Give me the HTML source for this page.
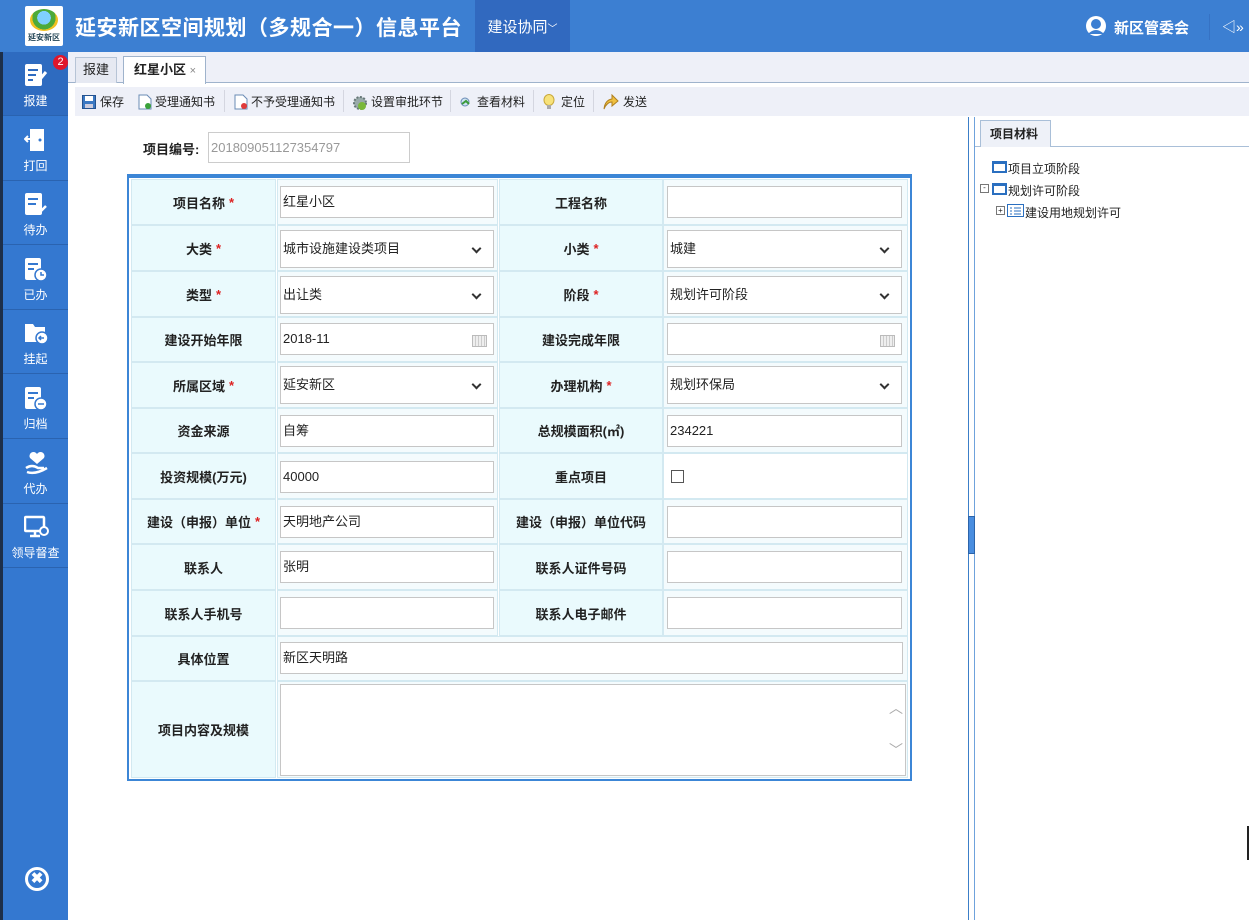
<!DOCTYPE html>
<html><head><meta charset="utf-8">
<style>
*{margin:0;padding:0;box-sizing:border-box}
body{width:1249px;height:920px;position:relative;overflow:hidden;background:#fff;font-family:"Liberation Sans","Noto Sans CJK SC",sans-serif;font-size:12px;color:#222}
.a{position:absolute}
#hdr{left:0;top:0;width:1249px;height:52px;background:#3c7fd2}
#side{left:0;top:52px;width:68px;height:868px;background:#3478d0;border-left:3px solid #1d2f4a}
.si{position:absolute;left:0;width:65px;height:64px;border-bottom:1px solid #2a63b0;color:#fff;text-align:center;font-size:12px}
.si .t{position:absolute;left:0;width:65px;top:40px}
.si svg{position:absolute;left:21px;top:10px}
.l{position:absolute;background:#eafafd;border:1px solid #d3e9f1;font-weight:bold;font-size:13px;text-align:center;display:flex;align-items:center;justify-content:center;color:#222}
.l b{color:#d22;margin-left:4px;font-weight:bold}
.c{position:absolute;background:#f4fbfd;border:1px solid #d3e9f1}
.i{position:absolute;background:#fff;border:1px solid #c6c6c6;height:32px;padding-left:2px;line-height:30px;font-size:13px;color:#222}
.dd:after{content:"";position:absolute;right:13px;top:14px;width:5px;height:5px;border-right:2px solid #333;border-bottom:2px solid #333;transform:rotate(45deg)}
.cal:after{content:"";position:absolute;right:6px;top:11px;width:13px;height:10px;border:1px solid #bbb;background:repeating-linear-gradient(90deg,#eee 0 2px,#ccc 2px 3px)}
.tb{position:absolute;top:92px;font-size:12px;color:#222;height:20px;line-height:20px}
.sep{position:absolute;top:90px;width:1px;height:22px;background:#d4d6e0}
</style></head><body>
<div class="a" id="hdr">
  <div class="a" style="left:25px;top:6px;width:38px;height:40px;background:#fff;border-radius:2px">
    <div class="a" style="left:5px;top:3px;width:28px;height:22px;border-radius:50%;background:radial-gradient(circle at 50% 40%,#7fd0ff 0 35%,#4caa3a 36% 60%,#f0c020 61%)"></div>
    <div class="a" style="left:1px;top:27px;width:36px;font-size:8px;font-weight:bold;color:#245;text-align:center;line-height:10px">延安新区</div>
  </div>
  <div class="a" style="left:75px;top:12px;font-size:21px;color:#fff;font-weight:bold;letter-spacing:0.5px">延安新区空间规划（多规合一）信息平台</div>
  <div class="a" style="left:475px;top:0;width:95px;height:52px;background:#3169bf;color:#fff;font-size:15px;line-height:56px;text-align:center">建设协同<span style="font-size:10px">﹀</span></div>
  <svg class="a" style="left:1084px;top:16px" width="24" height="22" viewBox="0 0 24 22"><circle cx="12" cy="10" r="10" fill="#fff"/><circle cx="12" cy="8" r="5" fill="#3c7fd2"/><path d="M4 18 Q12 10 20 18" fill="#3c7fd2"/></svg>
  <div class="a" style="left:1114px;top:17px;color:#fff;font-size:15px;font-weight:bold">新区管委会</div>
  <div class="a" style="left:1209px;top:14px;width:1px;height:26px;background:#3672c4"></div>
  <div class="a" style="left:1222px;top:17px;color:#fff;font-size:14px">◁»</div>
</div>

<div class="a" id="side">
  <div class="si" style="top:0;background:#2e6bc0">
    <svg width="24" height="26" viewBox="0 0 24 26"><rect x="1" y="2" width="17" height="22" rx="2" fill="#fff"/><path d="M4 8h10M4 13h8M4 18h5" stroke="#2e6bc0" stroke-width="2"/><path d="M12 22 L22 10" stroke="#fff" stroke-width="3"/></svg>
    <div class="t">报建</div>
    <div class="a" style="left:50px;top:3px;width:15px;height:15px;border-radius:50%;background:#e0162b;color:#fff;font-size:11px;line-height:15px">2</div>
  </div>
  <div class="si" style="top:65px"><svg width="24" height="26" viewBox="0 0 24 26"><path d="M6 2h14v22H6z" fill="#fff"/><path d="M1 12h8M4 9l-3 3 3 3" stroke="#fff" stroke-width="2" fill="none"/><circle cx="16" cy="13" r="1.5" fill="#3478d0"/></svg><div class="t">打回</div></div>
  <div class="si" style="top:129px"><svg width="24" height="26" viewBox="0 0 24 26"><rect x="1" y="2" width="17" height="22" rx="2" fill="#fff"/><path d="M4 8h10M4 13h8" stroke="#3478d0" stroke-width="2"/><path d="M12 19l3 3 7-7" stroke="#fff" stroke-width="2.5" fill="none"/></svg><div class="t">待办</div></div>
  <div class="si" style="top:194px"><svg width="24" height="26" viewBox="0 0 24 26"><rect x="1" y="2" width="16" height="22" rx="2" fill="#fff"/><path d="M4 8h10M4 13h6" stroke="#3478d0" stroke-width="2"/><circle cx="17" cy="19" r="6" fill="#fff" stroke="#3478d0" stroke-width="1.5"/><path d="M17 16v3h3" stroke="#3478d0" stroke-width="1.5" fill="none"/></svg><div class="t">已办</div></div>
  <div class="si" style="top:258px"><svg width="26" height="26" viewBox="0 0 26 26"><path d="M1 4h8l2 3h10v15H1z" fill="#fff"/><circle cx="18" cy="18" r="6" fill="#fff" stroke="#3478d0" stroke-width="1.5"/><path d="M20 18h-4M17 16l-2 2 2 2" stroke="#3478d0" stroke-width="1.5" fill="none"/></svg><div class="t">挂起</div></div>
  <div class="si" style="top:323px"><svg width="24" height="26" viewBox="0 0 24 26"><rect x="1" y="2" width="16" height="22" rx="2" fill="#fff"/><path d="M4 8h10M4 13h6" stroke="#3478d0" stroke-width="2"/><circle cx="17" cy="19" r="6" fill="#fff" stroke="#3478d0" stroke-width="1.5"/><path d="M14 19h6" stroke="#3478d0" stroke-width="1.5"/></svg><div class="t">归档</div></div>
  <div class="si" style="top:388px"><svg width="26" height="26" viewBox="0 0 26 26"><path d="M13 14 L6 8 a4 4 0 0 1 7-4 a4 4 0 0 1 7 4z" fill="#fff"/><path d="M2 18 q6-4 12 0 h6 M3 22 q8 3 20-4" stroke="#fff" stroke-width="2.5" fill="none"/></svg><div class="t">代办</div></div>
  <div class="si" style="top:452px"><svg width="26" height="26" viewBox="0 0 26 26"><rect x="1" y="3" width="19" height="14" rx="1" fill="none" stroke="#fff" stroke-width="2.5"/><path d="M6 22h10M11 17v5" stroke="#fff" stroke-width="2.5"/><circle cx="20" cy="17" r="4" fill="#3478d0" stroke="#fff" stroke-width="2"/></svg><div class="t">领导督查</div></div>
  <div class="a" style="left:22px;top:815px;width:24px;height:24px;border-radius:50%;border:3px solid #fff;color:#fff;font-size:15px;font-weight:bold;text-align:center;line-height:18px">✖</div>
</div>

<div class="a" style="left:68px;top:52px;width:1181px;height:31px;background:#eef0f8;border-bottom:1px solid #9fb3cc"></div>
<div class="a" style="left:75px;top:57px;width:42px;height:26px;background:#e6e9f2;border:1px solid #b7c4d6;border-bottom:none;text-align:center;line-height:24px;font-size:13px">报建</div>
<div class="a" style="left:123px;top:56px;width:83px;height:28px;background:#fff;border:1px solid #9fb3cc;border-bottom:none;line-height:26px;font-size:13px;font-weight:bold;padding-left:10px">红星小区 <span style="font-weight:normal;color:#888;font-size:11px">×</span></div>
<div class="a" style="left:75px;top:87px;width:1174px;height:29px;background:#eef0f8"></div>
<svg class="a" style="left:82px;top:95px" width="14" height="14" viewBox="0 0 14 14"><rect x="0.5" y="0.5" width="13" height="13" fill="#3b78c2" stroke="#24528f"/><rect x="3" y="1" width="8" height="5" fill="#fff"/><rect x="3" y="9" width="8" height="4" fill="#ccd"/></svg>
<div class="tb" style="left:100px">保存</div>
<svg class="a" style="left:138px;top:94px" width="14" height="16" viewBox="0 0 14 16"><path d="M1 1h8l4 4v10H1z" fill="#fff" stroke="#6a8bb5"/><circle cx="10" cy="12" r="3" fill="#3aa23a"/></svg>
<div class="tb" style="left:155px">受理通知书</div>
<div class="sep" style="left:224px"></div>
<svg class="a" style="left:234px;top:94px" width="14" height="16" viewBox="0 0 14 16"><path d="M1 1h8l4 4v10H1z" fill="#fff" stroke="#6a8bb5"/><circle cx="10" cy="12" r="3" fill="#e03a3a"/></svg>
<div class="tb" style="left:251px">不予受理通知书</div>
<div class="sep" style="left:343px"></div>
<svg class="a" style="left:352px;top:95px" width="16" height="16" viewBox="0 0 16 16"><circle cx="8" cy="8" r="6" fill="#9aa" stroke="#677" stroke-width="2" stroke-dasharray="2 1.5"/><circle cx="10" cy="11" r="4" fill="#7ab83a"/></svg>
<div class="tb" style="left:371px">设置审批环节</div>
<div class="sep" style="left:450px"></div>
<svg class="a" style="left:459px;top:96px" width="14" height="13" viewBox="0 0 14 13"><circle cx="6" cy="6" r="4" fill="#cfe3f5" stroke="#6a8bb5"/><path d="M3 8l4-3 3 3" stroke="#3a9a3a" stroke-width="2" fill="none"/></svg>
<div class="tb" style="left:477px">查看材料</div>
<div class="sep" style="left:533px"></div>
<svg class="a" style="left:543px;top:94px" width="12" height="17" viewBox="0 0 12 17"><ellipse cx="6" cy="6" rx="5" ry="5.5" fill="#f7e27a" stroke="#c9a83a"/><rect x="4" y="11" width="4" height="4" fill="#aaa"/></svg>
<div class="tb" style="left:561px">定位</div>
<div class="sep" style="left:593px"></div>
<svg class="a" style="left:602px;top:94px" width="17" height="16" viewBox="0 0 17 16"><path d="M2 15 Q3 6 10 5 V1 L16 7 L10 12 V8 Q5 8 2 15z" fill="#f0c040" stroke="#b08020"/></svg>
<div class="tb" style="left:623px">发送</div>

<div class="a" style="left:143px;top:139px;font-size:13px;font-weight:bold">项目编号:</div>
<div class="a" style="left:208px;top:132px;width:202px;height:31px;border:1px solid #ccc;color:#999;font-size:13px;line-height:29px;padding-left:2px">201809051127354797</div>

<div class="a" style="left:127px;top:174px;width:785px;height:607px;border:2px solid #3c86d6;border-top-width:4px;background:#fff"></div>

<div class="l" style="left:131px;top:179px;width:145px;height:46px">项目名称<b>*</b></div><div class="c" style="left:277px;top:179px;width:221px;height:46px"></div><div class="i" style="left:280px;top:186px;width:214px">红星小区</div>
<div class="l" style="left:499px;top:179px;width:164px;height:46px">工程名称</div><div class="c" style="left:663px;top:179px;width:245px;height:46px"></div><div class="i" style="left:667px;top:186px;width:235px"></div>

<div class="l" style="left:131px;top:225px;width:145px;height:46px">大类<b>*</b></div><div class="c" style="left:277px;top:225px;width:221px;height:46px"></div><div class="i dd" style="left:280px;top:230px;width:214px;height:38px;line-height:36px">城市设施建设类项目</div>
<div class="l" style="left:499px;top:225px;width:164px;height:46px">小类<b>*</b></div><div class="c" style="left:663px;top:225px;width:245px;height:46px"></div><div class="i dd" style="left:667px;top:230px;width:235px;height:38px;line-height:36px">城建</div>

<div class="l" style="left:131px;top:271px;width:145px;height:46px">类型<b>*</b></div><div class="c" style="left:277px;top:271px;width:221px;height:46px"></div><div class="i dd" style="left:280px;top:276px;width:214px;height:38px;line-height:36px">出让类</div>
<div class="l" style="left:499px;top:271px;width:164px;height:46px">阶段<b>*</b></div><div class="c" style="left:663px;top:271px;width:245px;height:46px"></div><div class="i dd" style="left:667px;top:276px;width:235px;height:38px;line-height:36px">规划许可阶段</div>

<div class="l" style="left:131px;top:317px;width:145px;height:45px">建设开始年限</div><div class="c" style="left:277px;top:317px;width:221px;height:45px"></div><div class="i cal" style="left:280px;top:323px;width:214px">2018-11</div>
<div class="l" style="left:499px;top:317px;width:164px;height:45px">建设完成年限</div><div class="c" style="left:663px;top:317px;width:245px;height:45px"></div><div class="i cal" style="left:667px;top:323px;width:235px"></div>

<div class="l" style="left:131px;top:362px;width:145px;height:46px">所属区域<b>*</b></div><div class="c" style="left:277px;top:362px;width:221px;height:46px"></div><div class="i dd" style="left:280px;top:366px;width:214px;height:38px;line-height:36px">延安新区</div>
<div class="l" style="left:499px;top:362px;width:164px;height:46px">办理机构<b>*</b></div><div class="c" style="left:663px;top:362px;width:245px;height:46px"></div><div class="i dd" style="left:667px;top:366px;width:235px;height:38px;line-height:36px">规划环保局</div>

<div class="l" style="left:131px;top:408px;width:145px;height:45px">资金来源</div><div class="c" style="left:277px;top:408px;width:221px;height:45px"></div><div class="i" style="left:280px;top:415px;width:214px">自筹</div>
<div class="l" style="left:499px;top:408px;width:164px;height:45px">总规模面积(㎡)</div><div class="c" style="left:663px;top:408px;width:245px;height:45px"></div><div class="i" style="left:667px;top:415px;width:235px">234221</div>

<div class="l" style="left:131px;top:453px;width:145px;height:46px">投资规模(万元)</div><div class="c" style="left:277px;top:453px;width:221px;height:46px"></div><div class="i" style="left:280px;top:461px;width:214px">40000</div>
<div class="l" style="left:499px;top:453px;width:164px;height:46px">重点项目</div><div class="c" style="left:663px;top:453px;width:245px;height:46px;background:#fff"></div><div class="a" style="left:671px;top:470px;width:13px;height:13px;border:1px solid #555;background:#fff"></div>

<div class="l" style="left:131px;top:499px;width:145px;height:45px">建设（申报）单位<b>*</b></div><div class="c" style="left:277px;top:499px;width:221px;height:45px"></div><div class="i" style="left:280px;top:506px;width:214px">天明地产公司</div>
<div class="l" style="left:499px;top:499px;width:164px;height:45px">建设（申报）单位代码</div><div class="c" style="left:663px;top:499px;width:245px;height:45px"></div><div class="i" style="left:667px;top:506px;width:235px"></div>

<div class="l" style="left:131px;top:544px;width:145px;height:46px">联系人</div><div class="c" style="left:277px;top:544px;width:221px;height:46px"></div><div class="i" style="left:280px;top:551px;width:214px">张明</div>
<div class="l" style="left:499px;top:544px;width:164px;height:46px">联系人证件号码</div><div class="c" style="left:663px;top:544px;width:245px;height:46px"></div><div class="i" style="left:667px;top:551px;width:235px"></div>

<div class="l" style="left:131px;top:590px;width:145px;height:46px">联系人手机号</div><div class="c" style="left:277px;top:590px;width:221px;height:46px"></div><div class="i" style="left:280px;top:597px;width:214px"></div>
<div class="l" style="left:499px;top:590px;width:164px;height:46px">联系人电子邮件</div><div class="c" style="left:663px;top:590px;width:245px;height:46px"></div><div class="i" style="left:667px;top:597px;width:235px"></div>

<div class="l" style="left:131px;top:636px;width:145px;height:45px">具体位置</div><div class="c" style="left:277px;top:636px;width:631px;height:45px"></div><div class="i" style="left:280px;top:642px;width:623px">新区天明路</div>

<div class="l" style="left:131px;top:681px;width:145px;height:97px">项目内容及规模</div><div class="c" style="left:277px;top:681px;width:631px;height:97px"></div>
<div class="i" style="left:280px;top:684px;width:626px;height:92px"></div>
<div class="a" style="left:889px;top:698px;color:#aaa;font-size:14px">︿</div>
<div class="a" style="left:889px;top:740px;color:#aaa;font-size:14px">﹀</div>

<div class="a" style="left:968px;top:117px;width:1px;height:803px;background:#3c7fc8"></div>
<div class="a" style="left:974px;top:117px;width:1px;height:803px;background:#6fa2dc"></div>
<div class="a" style="left:968px;top:516px;width:7px;height:38px;background:#4a8ee0;border:1px solid #2c64aa"></div>
<div class="a" style="left:975px;top:146px;width:274px;height:1px;background:#a9bfd8"></div>
<div class="a" style="left:980px;top:120px;width:71px;height:27px;background:#eef1f8;border:1px solid #a9bfd8;border-bottom:none;font-weight:bold;font-size:12px;line-height:26px;padding-left:9px">项目材料</div>
<div class="a" style="left:992px;top:161px;width:15px;height:12px;border:2px solid #2a6fc0;border-top-width:3px;background:#fff"></div>
<div class="a" style="left:1008px;top:160px;font-size:12px">项目立项阶段</div>
<div class="a" style="left:980px;top:184px;width:9px;height:9px;border:1px solid #777;font-size:8px;line-height:6px;text-align:center">-</div>
<div class="a" style="left:992px;top:183px;width:15px;height:12px;border:2px solid #2a6fc0;border-top-width:3px;background:#fff"></div>
<div class="a" style="left:1008px;top:182px;font-size:12px">规划许可阶段</div>
<div class="a" style="left:996px;top:206px;width:9px;height:9px;border:1px solid #777;font-size:8px;line-height:7px;text-align:center">+</div>
<svg class="a" style="left:1007px;top:204px" width="17" height="13" viewBox="0 0 17 13"><rect x="0.5" y="0.5" width="16" height="12" fill="#fff" stroke="#2a6fc0"/><path d="M3 4h2M7 4h7M3 7h2M7 7h7M3 10h2M7 10h7" stroke="#2a6fc0"/></svg>
<div class="a" style="left:1025px;top:204px;font-size:12px">建设用地规划许可</div>
<div class="a" style="left:1247px;top:826px;width:2px;height:34px;background:#222"></div>
</body></html>
